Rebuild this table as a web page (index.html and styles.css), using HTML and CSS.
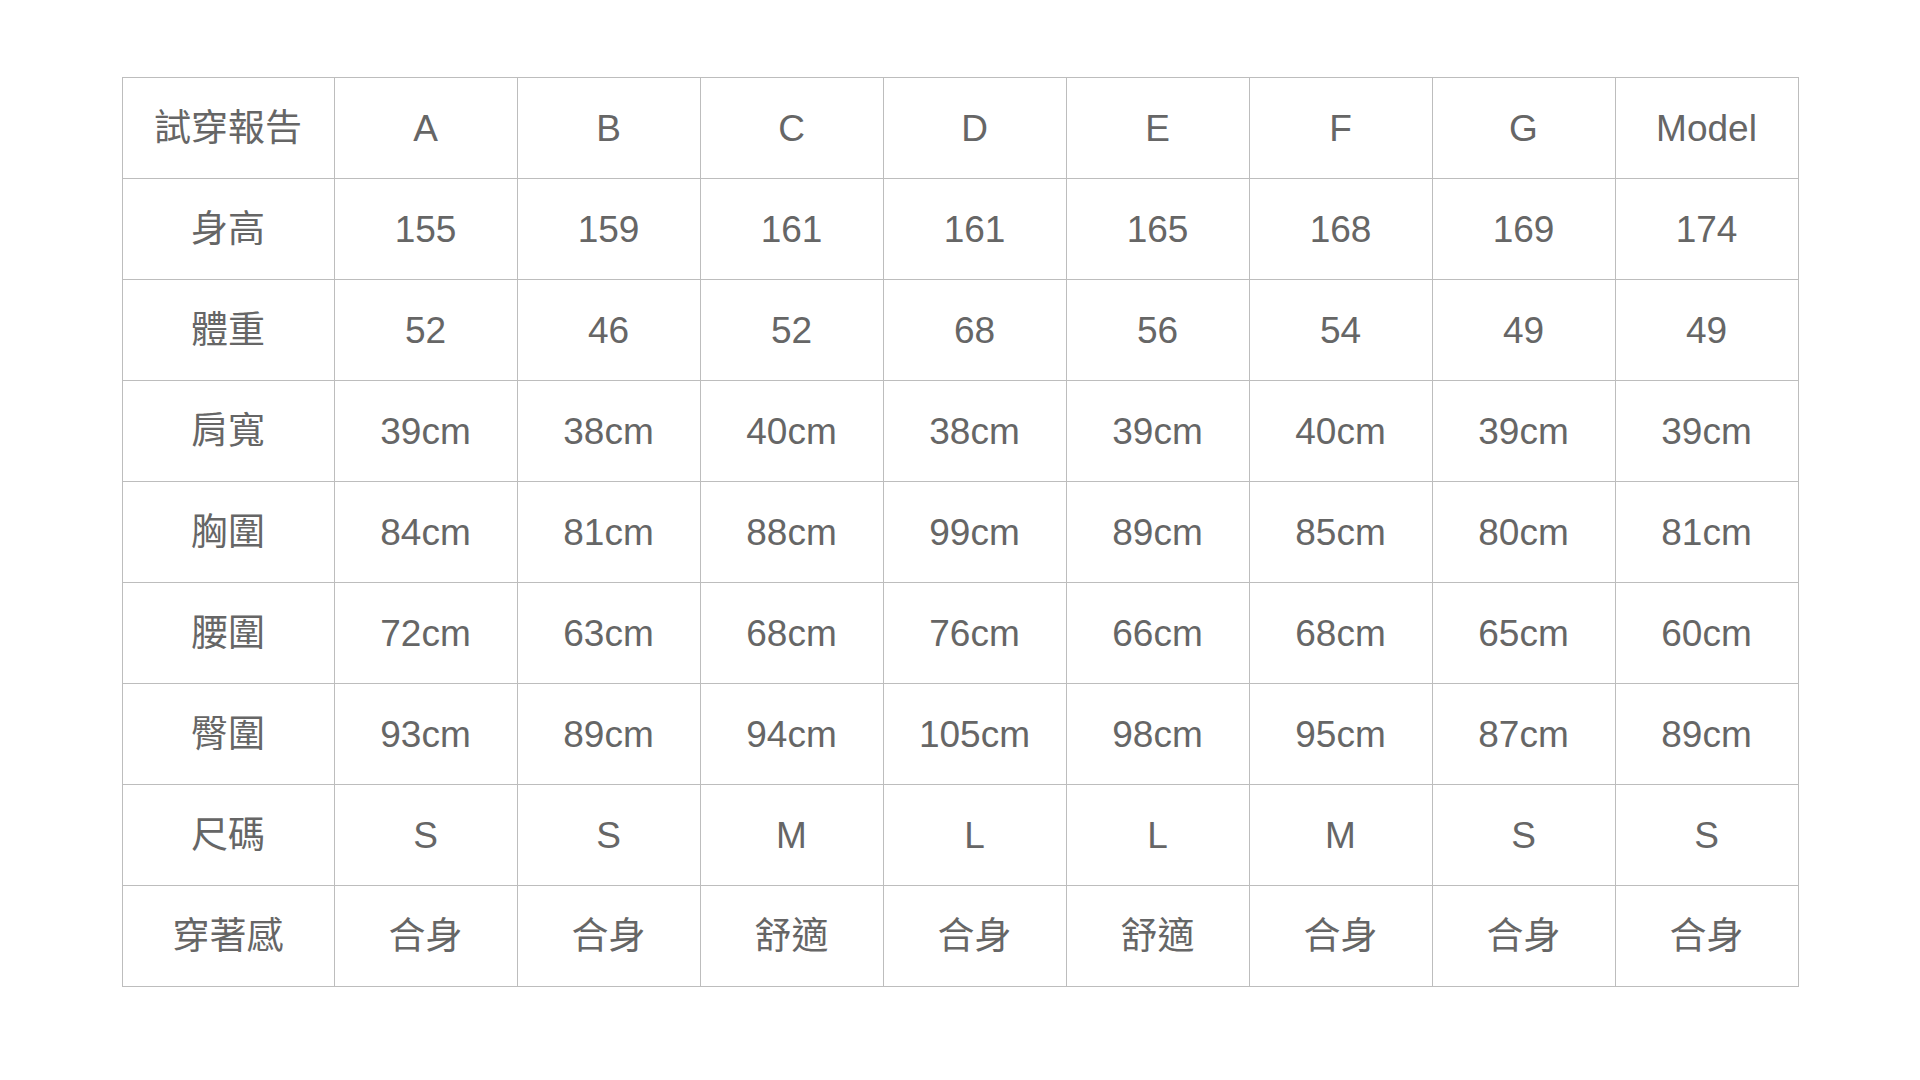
FILE: index.html
```html
<!DOCTYPE html>
<html lang="zh-Hant">
<head>
<meta charset="utf-8">
<title>試穿報告</title>
<link rel="stylesheet" href="styles.css">
</head>
<body>
<table class="fit-table">
  <colgroup>
    <col class="col-label">
    <col class="col-data"><col class="col-data"><col class="col-data"><col class="col-data">
    <col class="col-data"><col class="col-data"><col class="col-data"><col class="col-data">
  </colgroup>
  <tbody>
    <tr><td>試穿報告</td><td>A</td><td>B</td><td>C</td><td>D</td><td>E</td><td>F</td><td>G</td><td>Model</td></tr>
    <tr><td>身高</td><td>155</td><td>159</td><td>161</td><td>161</td><td>165</td><td>168</td><td>169</td><td>174</td></tr>
    <tr><td>體重</td><td>52</td><td>46</td><td>52</td><td>68</td><td>56</td><td>54</td><td>49</td><td>49</td></tr>
    <tr><td>肩寬</td><td>39cm</td><td>38cm</td><td>40cm</td><td>38cm</td><td>39cm</td><td>40cm</td><td>39cm</td><td>39cm</td></tr>
    <tr><td>胸圍</td><td>84cm</td><td>81cm</td><td>88cm</td><td>99cm</td><td>89cm</td><td>85cm</td><td>80cm</td><td>81cm</td></tr>
    <tr><td>腰圍</td><td>72cm</td><td>63cm</td><td>68cm</td><td>76cm</td><td>66cm</td><td>68cm</td><td>65cm</td><td>60cm</td></tr>
    <tr><td>臀圍</td><td>93cm</td><td>89cm</td><td>94cm</td><td>105cm</td><td>98cm</td><td>95cm</td><td>87cm</td><td>89cm</td></tr>
    <tr><td>尺碼</td><td>S</td><td>S</td><td>M</td><td>L</td><td>L</td><td>M</td><td>S</td><td>S</td></tr>
    <tr><td>穿著感</td><td>合身</td><td>合身</td><td>舒適</td><td>合身</td><td>舒適</td><td>合身</td><td>合身</td><td>合身</td></tr>
  </tbody>
</table>
</body>
</html>
```
FILE: styles.css
```css
html, body {
  margin: 0;
  padding: 0;
  background: #ffffff;
}

body {
  font-family: "Liberation Sans", "Noto Sans CJK TC", Arial, sans-serif;
  color: #666666;
}

.fit-table {
  border-collapse: collapse;
  table-layout: fixed;
  width: 1676px;
  margin: 77px auto 0;
}

.col-label {
  width: 212px;
}

.col-data {
  width: 183px;
}

.fit-table td {
  border: 1px solid #bdbdbd;
  height: 99px;
  padding: 1px 0 0;
  text-align: center;
  vertical-align: middle;
  font-size: 37px;
  line-height: 1;
  color: #666666;
}
```
